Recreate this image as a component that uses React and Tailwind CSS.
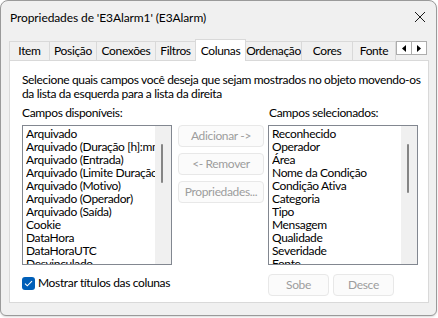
import { useState } from 'react';

const disponiveis = [
  'Arquivado',
  'Arquivado (Duração [h]:mm:ss)',
  'Arquivado (Entrada)',
  'Arquivado (Limite Duração)',
  'Arquivado (Motivo)',
  'Arquivado (Operador)',
  'Arquivado (Saída)',
  'Cookie',
  'DataHora',
  'DataHoraUTC',
  'Desvinculado',
];

const selecionados = [
  'Reconhecido',
  'Operador',
  'Área',
  'Nome da Condição',
  'Condição Ativa',
  'Categoria',
  'Tipo',
  'Mensagem',
  'Qualidade',
  'Severidade',
  'Fonte',
];

const tabs = [
  { label: 'Item', w: 'w-[41px]' },
  { label: 'Posição', w: 'w-[48px]' },
  { label: 'Conexões', w: 'w-[60px]' },
  { label: 'Filtros', w: 'w-[41px]' },
  { label: 'Colunas', w: 'w-[51px]', active: true },
  { label: 'Ordenação', w: 'w-[57px]' },
  { label: 'Cores', w: 'w-[52px]' },
  { label: 'Fonte', w: 'w-[44px]' },
];

function ListBox({ items, thumbH }) {
  return (
    <div className="relative w-[150px] h-[140px] border border-[#828790] bg-white overflow-hidden">
      <div className="pl-[3px] pt-px pr-[16px]">
        {items.map((it) => (
          <div key={it} className="h-[13px] leading-[13px] whitespace-nowrap overflow-hidden">
            {it}
          </div>
        ))}
      </div>
      {/* scrollbar */}
      <div className="absolute right-0 top-0 bottom-0 w-[16px] bg-[#f0f0f0]">
        <div className={`absolute left-[6px] top-[18px] w-[2px] bg-[#858585] rounded-full ${thumbH}`} />
      </div>
    </div>
  );
}

function Btn({ children, w = 'w-[86px]' }) {
  return (
    <div className={`${w} h-[22px] flex items-center justify-center rounded-[4px] border border-[#e8e8e8] bg-[#fbfbfb] text-[#9d9d9d]`}>
      {children}
    </div>
  );
}

export default function App() {
  const [checked] = useState(true);

  return (
    <div
      className="w-[438px] h-[318px] bg-white text-[12px] tracking-[-0.35px] text-black"
      style={{ fontFamily: 'Lato, "Noto Sans", "Liberation Sans", sans-serif' }}
    >
      <div className="relative w-[437px] h-[316px] bg-[#f0f0f0] border border-[#9a9a9a] rounded-t-[8px] rounded-b-[6px] shadow-[0_1px_2px_rgba(0,0,0,0.15)] flex flex-col">
        {/* title bar */}
        <div className="h-[36px] flex items-center justify-between pl-[9px] pr-[8px]">
          <span className="leading-none -mt-[2px] tracking-[-0.1px]">Propriedades de 'E3Alarm1' (E3Alarm)</span>
          <svg width="12" height="12" viewBox="0 0 12 12" className="mr-[2px] -mt-[4px]">
            <path d="M1 1L11 11M11 1L1 11" stroke="#1a1a1a" strokeWidth="1" />
          </svg>
        </div>

        {/* tabs */}
        <div className="relative ml-[8px] mt-[2px] h-[21px] flex items-end">
          {tabs.map((t) =>
            t.active ? (
              <div
                key={t.label}
                className={`${t.w} h-[22px] -mb-px -ml-px z-10 bg-white border border-b-0 border-[#d9d9d9] flex items-center justify-center`}
              >
                {t.label}
              </div>
            ) : (
              <div
                key={t.label}
                className={`${t.w} h-[19px] bg-[#f0f0f0] border border-b-0 border-[#d9d9d9] -ml-px first:ml-0 flex items-center justify-center overflow-hidden whitespace-nowrap`}
              >
                {t.label}
              </div>
            )
          )}
          {/* scroll arrows */}
          <div className="absolute left-[387px] top-[2px] flex bg-[#f0f0f0]">
            <div className="w-[16px] h-[14px] border border-[#adadad] bg-white flex items-center justify-center">
              <svg width="4" height="7" viewBox="0 0 4 7"><path d="M4 0V7L0 3.5Z" fill="#000" /></svg>
            </div>
            <div className="w-[16px] h-[14px] -ml-px border border-[#adadad] bg-white flex items-center justify-center">
              <svg width="4" height="7" viewBox="0 0 4 7"><path d="M0 0V7L4 3.5Z" fill="#000" /></svg>
            </div>
          </div>
        </div>

        {/* panel */}
        <div className="ml-[8px] w-[420px] h-[243px] bg-white border border-[#d9d9d9] pl-[12px] pt-[12px]">
          <p className="leading-[14px] whitespace-nowrap">
            Selecione quais campos você deseja que sejam mostrados no objeto movendo-os
            <br />
            da lista da esquerda para a lista da direita
          </p>

          <div className="mt-[5px] flex">
            <div className="flex flex-col">
              <span className="leading-[14px] mb-[5px]">Campos disponíveis:</span>
              <ListBox items={disponiveis} thumbH="h-[39px]" />
            </div>
            <div className="ml-[6px] mt-[19px] flex flex-col gap-[6px]">
              <Btn>Adicionar -&gt;</Btn>
              <Btn>&lt;- Remover</Btn>
              <Btn>Propriedades...</Btn>
            </div>
            <div className="ml-[4px] flex flex-col">
              <span className="leading-[14px] mb-[5px] pl-px">Campos selecionados:</span>
              <ListBox items={selecionados} thumbH="h-[49px]" />
            </div>
          </div>

          <div className="mt-[9px] flex items-start">
            <div className="mt-[2px] flex items-center w-[246px]">
              <div className={`w-[13px] h-[13px] rounded-[3px] flex items-center justify-center ${checked ? 'bg-[#005fb8]' : 'bg-white border border-[#888]'}`}>
                <svg width="9" height="7" viewBox="0 0 9 7">
                  <path d="M1 3.6L3.3 5.8L8 1.2" stroke="#fff" strokeWidth="1.1" fill="none" />
                </svg>
              </div>
              <span className="ml-[3px] leading-[14px]">Mostrar títulos das colunas</span>
            </div>
            <div className="flex gap-[4px]">
              <Btn w="w-[61px]">Sobe</Btn>
              <Btn w="w-[61px]">Desce</Btn>
            </div>
          </div>
        </div>
      </div>
    </div>
  );
}
